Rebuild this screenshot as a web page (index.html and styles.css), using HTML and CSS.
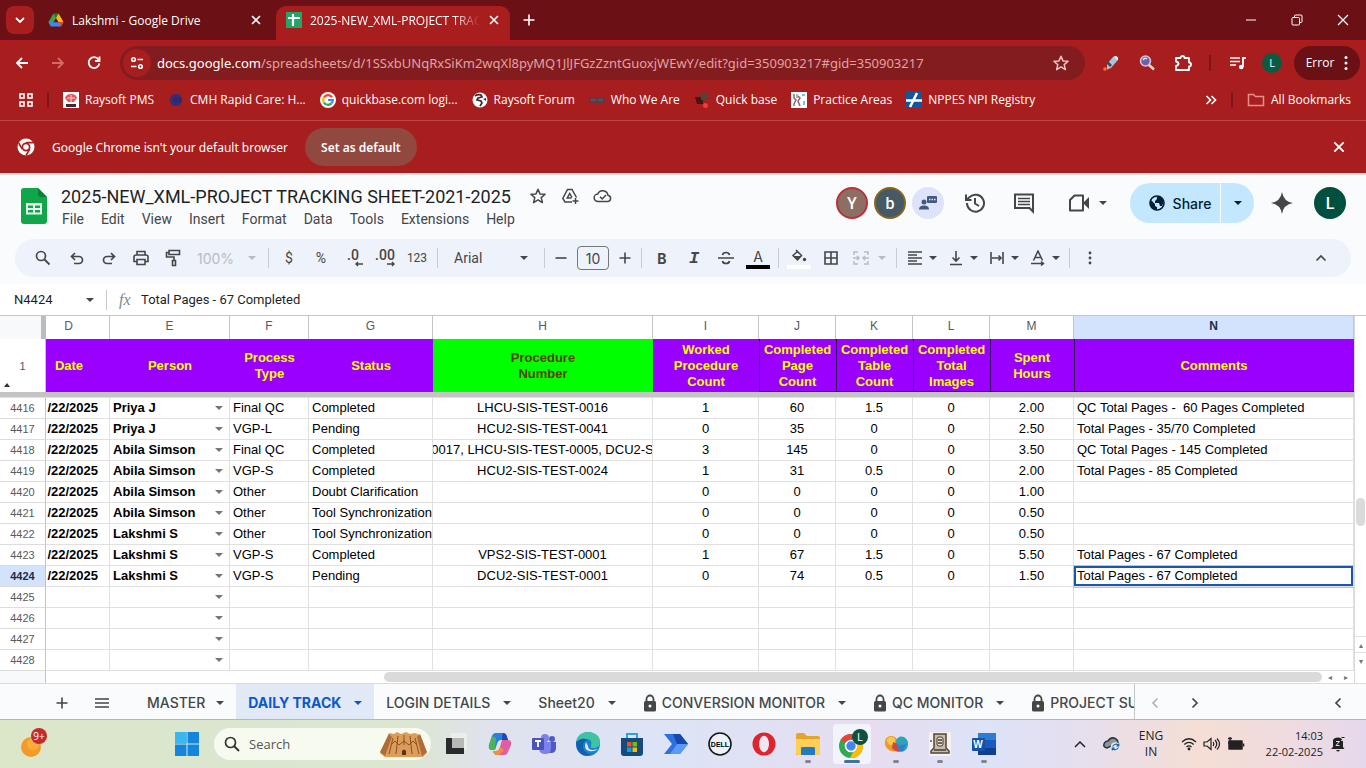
FILE: index.html
```html
<!DOCTYPE html>
<html lang="en">
<head>
  <meta charset="UTF-8">
  <meta name="viewport" content="width=device-width, initial-scale=1">
  <title>2025-NEW_XML-PROJECT TRACKING SHEET-2021-2025</title>
  <link rel="stylesheet" href="styles.css">
</head>
<body>

  <!-- shared icons -->
  <svg class="defs" width="0" height="0">
    <symbol id="x" viewBox="0 0 12 12"><path d="M2 2l8 8M10 2l-8 8" fill="none" stroke="currentColor" stroke-width="1.6"/></symbol>
    <symbol id="plus" viewBox="0 0 12 12"><path d="M6 .5v11M.5 6h11" fill="none" stroke="currentColor" stroke-width="1.6"/></symbol>
    <symbol id="lock" viewBox="0 0 14 18"><path d="M3.500 8V5a3.500 3.500 0 0 1 7 0v3" fill="none" stroke="currentColor" stroke-width="1.800"/><rect x="1" y="7" width="12" height="10.500" rx="1.500" fill="currentColor"/><circle cx="7" cy="12" r="1.500" fill="#f9fbfd"/></symbol>
    <symbol id="star" viewBox="0 0 18 18"><path d="M9 2.200l2 4.700 5.100.4-3.900 3.300 1.200 5L9 12.900l-4.400 2.700 1.200-5L1.900 7.300l5.100-.4z" fill="none" stroke="currentColor" stroke-width="1.500" stroke-linejoin="round"/></symbol>
    <symbol id="chrome-mono" viewBox="0 0 18 18"><circle cx="9" cy="9" r="8.500" fill="currentColor"/><circle cx="9" cy="9" r="3.600" fill="currentColor" stroke="#a81d1d" stroke-width="1.700"/><path d="M9 4.600h7.500M5.200 11.200L1.700 5M12.800 11.200L9 17.500" stroke="#a81d1d" stroke-width="1.600"/></symbol>
  </svg>

  <!-- browser tabs -->
  <header class="tabstrip">
    <button class="tab-search" aria-label="Search tabs"><svg width="10" height="7" viewBox="0 0 10 7"><path d="M1 1l4 4 4-4" fill="none" stroke="currentColor" stroke-width="1.800"/></svg></button>
    <div class="tab">
      <svg width="16" height="16" viewBox="0 0 16 16"><path d="M5.500 1.500h5L8 6z" fill="#188038"/><path d="M5.500 1.500L8 6l-5 8.500L.5 10z" fill="#34a853"/><path d="M10.500 1.500L15.500 10h-5L8 6z" fill="#fbbc04"/><path d="M.5 10.200h15L13 14.500H3z" fill="#4285f4"/><path d="M10.500 10h5L13 14.500z" fill="#ea4335"/></svg>
      <span class="tab-name">Lakshmi - Google Drive</span>
      <button class="close" aria-label="Close tab"><svg width="12" height="12"><use href="#x"/></svg></button>
    </div>
    <div class="tab current">
      <svg width="16" height="16" viewBox="0 0 16 16"><rect width="16" height="16" fill="#23a566"/><path d="M2 6h12M7 2v12" stroke="#fff" stroke-width="2.200"/></svg>
      <span class="tab-name">2025-NEW_XML-PROJECT TRAC</span>
      <button class="close" aria-label="Close tab"><svg width="12" height="12"><use href="#x"/></svg></button>
    </div>
    <button class="new-tab" aria-label="New tab"><svg width="12" height="12"><use href="#plus"/></svg></button>
    <div class="window-buttons">
      <button aria-label="Minimize"><svg width="12" height="12" viewBox="0 0 12 12"><path d="M1 6h10" stroke="currentColor"/></svg></button>
      <button aria-label="Restore"><svg width="12" height="12" viewBox="0 0 12 12"><g fill="none" stroke="currentColor"><rect x="1" y="3.500" width="7.500" height="7.500" rx="1"/><path d="M3.500 3.500V2q0-1 1-1H10q1 0 1 1v5.500q0 1-1 1H8.500"/></g></svg></button>
      <button aria-label="Close"><svg width="12" height="12" viewBox="0 0 12 12"><path d="M1 1l10 10M11 1L1 11" stroke="currentColor" stroke-width="1.200"/></svg></button>
    </div>
  </header>

  <!-- address bar -->
  <div class="navbar">
    <button class="nav" aria-label="Back"><svg width="16" height="16" viewBox="0 0 16 16"><path d="M14 8H3M8 3L3 8l5 5" fill="none" stroke="currentColor" stroke-width="1.800"/></svg></button>
    <button class="nav dim" aria-label="Forward"><svg width="16" height="16" viewBox="0 0 16 16"><path d="M2 8h11M8 3l5 5-5 5" fill="none" stroke="currentColor" stroke-width="1.800"/></svg></button>
    <button class="nav" aria-label="Reload"><svg width="16" height="16" viewBox="0 0 16 16"><path d="M12.500 4.500A5.400 5.400 0 1 0 13.400 8.500M13.500 1.500V6H9" fill="none" stroke="currentColor" stroke-width="1.800"/></svg></button>
    <div class="omnibox">
      <button class="site-info" aria-label="Site information"><svg width="14" height="14" viewBox="0 0 14 14"><g fill="none" stroke="currentColor" stroke-width="1.600"><circle cx="3.500" cy="3.500" r="1.800"/><path d="M7.500 3.500H13M1 10.500h5.500"/><circle cx="10.500" cy="10.500" r="1.800"/></g></svg></button>
      <div class="url"><b>docs.google.com</b>/spreadsheets/d/1SSxbUNqRxSiKm2wqXl8pyMQ1JlJFGzZzntGuoxjWEwY/edit?gid=350903217#gid=350903217</div>
      <button class="fav" aria-label="Bookmark this tab"><svg width="18" height="18"><use href="#star"/></svg></button>
    </div>
    <div class="extensions">
      <button aria-label="Color picker"><svg width="18" height="18" viewBox="0 0 18 18"><path d="M5 10l6-7q2-1.500 4 0t0 4l-6 7-4 1.500z" fill="#a9c6d6"/><path d="M4 9l4 4 2-2-4-4z" fill="#3b4a55"/><path d="M12 2.500q2-1 3.500.5t0 3.500z" fill="#e9f3f8"/><circle cx="3" cy="15" r="1.800" fill="#ff6b3d"/></svg></button>
      <button aria-label="Zoom"><svg width="18" height="18" viewBox="0 0 18 18"><path d="M10.500 10.500l5.500 5" stroke="#e8d5cf" stroke-width="2.600"/><circle cx="7.500" cy="7" r="5" fill="#6d5fa8" stroke="#d8c4d2" stroke-width="1.600"/><path d="M5 6q2-3 4-1" stroke="#cfe2ff" stroke-width="1.500" fill="none"/></svg></button>
      <button aria-label="Extensions"><svg width="18" height="18" viewBox="0 0 18 18"><path d="M2 4h4.500a2 2 0 1 1 4 0H15v4.500a2 2 0 1 1 0 4V16H2v-4q2.500-.5 2.500-2.200T2 7.500z" fill="none" stroke="currentColor" stroke-width="1.800" stroke-linejoin="round"/></svg></button>
    </div>
    <span class="bar"></span>
    <button class="media" aria-label="Media controls"><svg width="18" height="16" viewBox="0 0 18 16"><path d="M1 3h10M1 6.500h10M1 10h6" stroke="currentColor" stroke-width="1.600"/><path d="M14 12V3h3" fill="none" stroke="currentColor" stroke-width="1.800"/><circle cx="12.200" cy="12" r="2.300" fill="currentColor"/></svg></button>
    <button class="profile" aria-label="Profile">L</button>
    <button class="error">Error <svg width="4" height="16" viewBox="0 0 4 16"><g fill="currentColor"><circle cx="2" cy="2.500" r="1.500"/><circle cx="2" cy="8" r="1.500"/><circle cx="2" cy="13.500" r="1.500"/></g></svg></button>
  </div>

  <!-- bookmarks -->
  <nav class="bookmarks">
    <button aria-label="Apps"><svg width="14" height="14" viewBox="0 0 14 14"><g fill="none" stroke="currentColor" stroke-width="1.600"><rect x="1" y="1" width="4" height="4"/><rect x="9" y="1" width="4" height="4"/><rect x="1" y="9" width="4" height="4"/><rect x="9" y="9" width="4" height="4"/></g></svg></button>
    <span class="bar"></span>
    <a href="#"><svg width="16" height="16" viewBox="0 0 16 16"><rect width="16" height="16" fill="#fff"/><path d="M2 6q1-4 6-4t6 4l-3 4H5z" fill="#e2585f"/><path d="M4 6h8M8 3v8" stroke="#fbd0d0"/><path d="M3 12h10v3H3z" fill="#3a2b35"/></svg>Raysoft PMS</a>
    <a href="#"><svg width="16" height="16" viewBox="0 0 16 16"><circle cx="8" cy="8" r="6" fill="#3a2560"/><path d="M13 4a6 6 0 1 0 0 8l-3-2a3 3 0 1 1 0-4z" fill="#283488"/></svg>CMH Rapid Care: H...</a>
    <a href="#"><svg width="16" height="16" viewBox="0 0 16 16"><circle cx="8" cy="8" r="8" fill="#fff"/><g fill="none" stroke-width="2.200"><path d="M12 5.200A4.800 4.800 0 0 0 4 5.400" stroke="#ea4335"/><path d="M4 5.400a4.800 4.800 0 0 0 0 5.200" stroke="#fbbc05"/><path d="M4 10.600a4.800 4.800 0 0 0 7.400.8" stroke="#34a853"/><path d="M11.400 11.400A4.800 4.800 0 0 0 12.800 8H8" stroke="#4285f4"/></g></svg>quickbase.com logi...</a>
    <a href="#"><svg width="16" height="16" viewBox="0 0 16 16"><circle cx="8" cy="8" r="7.500" fill="#fff"/><path d="M3 4q3-2 6-1l1 2-4 1-1 2 4 1 1 2-2 3" fill="none" stroke="#3a2a2c" stroke-width="1.700"/><path d="M11 7l3-1v3z" fill="#3a2a2c"/></svg>Raysoft Forum</a>
    <a href="#"><svg width="16" height="16" viewBox="0 0 16 16"><rect y="5" width="16" height="6" rx="2" fill="#66363a"/><path d="M2 8h5M9 8h5" fill="none" stroke="#4d5663" stroke-width="2.500"/></svg>Who We Are</a>
    <a href="#"><svg width="16" height="16" viewBox="0 0 16 16"><path d="M1 5h8v7H3z" fill="#441512"/><path d="M6 1l8 1-1 6H7z" fill="#4c4839"/><circle cx="11.500" cy="13.500" r="2.500" fill="#f23d3d"/></svg>Quick base</a>
    <a href="#"><svg width="16" height="16" viewBox="0 0 16 16"><rect width="16" height="16" fill="#fff"/><path d="M3 2v4l2 2-2 4v2M7 4l2 2-2 3 2 5" fill="none" stroke="#8d6470" stroke-width="1.500"/><path d="M6 2v4M13 9v4M11 3h3" stroke="#64a9a4" stroke-width="1.500"/></svg>Practice Areas</a>
    <a href="#"><svg width="16" height="16" viewBox="0 0 16 16"><rect width="16" height="16" fill="#14569e"/><path d="M0 8.500h16M11 1L4 15" stroke="#fff" stroke-width="2.600"/></svg>NPPES NPI Registry</a>
    <button class="more-marks" aria-label="More bookmarks"><svg width="12" height="10" viewBox="0 0 12 10"><path d="M1.500 1l4 4-4 4M6.500 1l4 4-4 4" fill="none" stroke="currentColor" stroke-width="1.700"/></svg></button>
    <span class="bar"></span>
    <a href="#"><svg width="18" height="14" viewBox="0 0 18 14"><path d="M1.500 1.500h5l2 2h8v9h-15z" fill="none" stroke="#e88e8a" stroke-width="1.500"/></svg>All Bookmarks</a>
  </nav>

  <div class="infobar">
    <svg width="18" height="18"><use href="#chrome-mono"/></svg>
    <span>Google Chrome isn't your default browser</span>
    <button class="set-default">Set as default</button>
    <button class="close" aria-label="Dismiss"><svg width="14" height="14"><use href="#x"/></svg></button>
  </div>

  <!-- sheets header -->
  <main class="app">
    <div class="doc-head">
      <svg class="logo" width="28" height="36" viewBox="0 0 28 36"><path d="M4 0h14l9 9v24q0 3-3 3H4q-3 0-3-3V3q0-3 3-3z" fill="#10a64a"/><path d="M18 0l9 9h-6q-3 0-3-3z" fill="#087f3a"/><path d="M6 15h16v11.500H6z" fill="#e9f7ee"/><path d="M8 17.500h5v2.500H8zM15 17.500h5v2.500h-5zM8 22h5v2.500H8zM15 22h5v2.500h-5z" fill="#10a64a"/></svg>
      <div class="doc-info">
        <div class="title-row">
          <h1>2025-NEW_XML-PROJECT TRACKING SHEET-2021-2025</h1>
          <button aria-label="Star"><svg width="18" height="18"><use href="#star"/></svg></button>
          <button aria-label="Move"><svg width="18" height="18" viewBox="0 0 18 18"><g fill="none" stroke="currentColor" stroke-width="1.500"><path d="M11 15H4L1.800 11.500 6.500 2.500h4.500l4.500 8"/><path d="M10.500 11H6.200L8.700 6.500l2.300 4"/><path d="M14.500 11v6M11.500 14h6"/></g></svg></button>
          <button aria-label="Document status"><svg width="20" height="16" viewBox="0 0 20 16"><g fill="none" stroke="currentColor" stroke-width="1.500"><path d="M5 13.500a3.700 3.700 0 0 1-.3-7.400 5.300 5.300 0 0 1 10.200 1.100A3.200 3.200 0 0 1 15 13.500z"/><path d="M7 8.700l2.200 2.200 3.800-3.900"/></g></svg></button>
        </div>
        <div class="menus">
          <button>File</button><button>Edit</button><button>View</button><button>Insert</button><button>Format</button><button>Data</button><button>Tools</button><button>Extensions</button><button>Help</button>
        </div>
      </div>
      <div class="doc-actions">
        <span class="avatar y">Y</span>
        <span class="avatar b">b</span>
        <span class="avatar chat"><svg width="20" height="18" viewBox="0 0 20 18"><g fill="#44597e"><circle cx="6" cy="8" r="2.500"/><path d="M1 15.500q0-4 5-4t5 4z"/><rect x="9" y="2" width="10" height="7" rx="1"/></g><path d="M11 5.500h1.500M13.500 5.500H15M16 5.500h1.500" stroke="#dfe6fb" stroke-width="1.500"/></svg></span>
        <button class="act history" aria-label="Version history"><svg width="22" height="22" viewBox="0 0 22 22"><path d="M3 11a8.500 8.500 0 1 0 2.700-6L2 8M2 2.500V8h5.500M11 6v5.500l4 2.500" fill="none" stroke="currentColor" stroke-width="2"/></svg></button>
        <button class="act" aria-label="Comments"><svg width="22" height="22" viewBox="0 0 22 22"><path d="M2 2.500h18v17l-3.500-3.500H2z" fill="none" stroke="currentColor" stroke-width="2"/><path d="M5 6.500h12M5 9.500h12M5 12.500h12" stroke="currentColor" stroke-width="1.700"/></svg></button>
        <button class="meet" aria-label="Join a call"><svg width="22" height="20" viewBox="0 0 22 20"><path d="M6.500 2.500H15v15H2V7z" fill="none" stroke="currentColor" stroke-width="2" stroke-linejoin="round"/><path d="M16 9l5-5v12l-5-5z" fill="currentColor"/></svg><i class="caret"></i></button>
        <div class="share">
          <button class="share-main"><svg width="16" height="16" viewBox="0 0 16 16"><circle cx="8" cy="8" r="7" fill="#c2e7ff" stroke="#001d35" stroke-width="1.600"/><path d="M2 5l4 4v2l2 1v3Q2 14 1 8zM9 1q-2 1-1 3L6 6v2h4l1 3h2q2-3 1-6l-2-3z" fill="#001d35"/></svg>Share</button>
          <button class="share-more" aria-label="Share options"><i class="caret"></i></button>
        </div>
        <button class="gemini" aria-label="Gemini"><svg width="22" height="22" viewBox="0 0 22 22"><path d="M11 0q1.500 9.500 11 11-9.500 1.500-11 11Q9.500 12.500 0 11 9.500 9.500 11 0z" fill="currentColor"/></svg></button>
        <span class="avatar me">L</span>
      </div>
    </div>

    <!-- formatting toolbar -->
    <div class="toolbar">
      <button class="tb first" aria-label="Search the menus"><svg width="16" height="16" viewBox="0 0 16 16"><circle cx="6" cy="6" r="4.500" fill="none" stroke="currentColor" stroke-width="1.700"/><path d="M9.500 9.500l5 5" stroke="currentColor" stroke-width="1.800"/></svg></button>
      <button class="tb" aria-label="Undo"><svg width="16" height="16" viewBox="0 0 16 16"><path d="M6 3L2.500 6.500 6 10M3 6.500h7a3.500 3.500 0 0 1 0 7H5" fill="none" stroke="currentColor" stroke-width="1.700"/></svg></button>
      <button class="tb" aria-label="Redo"><svg width="16" height="16" viewBox="0 0 16 16"><path d="M10 3l3.500 3.500L10 10M13 6.500H6a3.500 3.500 0 0 0 0 7h5" fill="none" stroke="currentColor" stroke-width="1.700"/></svg></button>
      <button class="tb" aria-label="Print"><svg width="16" height="16" viewBox="0 0 16 16"><g fill="none" stroke="currentColor" stroke-width="1.600"><path d="M4 5V1.500h8V5M4 11.500H1V7q0-2 2-2h10q2 0 2 2v4.500h-3"/><path d="M4 9.500h8v5H4z"/></g></svg></button>
      <button class="tb" aria-label="Paint format"><svg width="16" height="18" viewBox="0 0 16 18"><g fill="none" stroke="currentColor" stroke-width="1.600"><path d="M4 1.500h10.500v4H4zM4 3.500H1.500V8H9v4"/><path d="M7.500 11.500h3v5h-3z"/></g></svg></button>
      <button class="zoom">100%<i class="caret"></i></button>
      <span class="sep"></span>
      <button class="tb txt">$</button>
      <button class="tb txt">%</button>
      <button class="tb dec"><span>.0</span><svg width="10" height="6" viewBox="0 0 10 6"><path d="M9 3H2M4 1L2 3l2 2" fill="none" stroke="currentColor" stroke-width="1.400"/></svg></button>
      <button class="tb dec"><span>.00</span><svg width="10" height="6" viewBox="0 0 10 6"><path d="M1 3h7M6 1l2 2-2 2" fill="none" stroke="currentColor" stroke-width="1.400"/></svg></button>
      <button class="tb num">123</button>
      <span class="sep"></span>
      <button class="font">Arial<i class="caret"></i></button>
      <span class="sep"></span>
      <button class="step" aria-label="Decrease font size"><svg width="12" height="12" viewBox="0 0 12 12"><path d="M.5 6h11" stroke="currentColor" stroke-width="1.600"/></svg></button>
      <input class="size" type="text" value="10" aria-label="Font size">
      <button class="step" aria-label="Increase font size"><svg width="12" height="12"><use href="#plus"/></svg></button>
      <span class="sep"></span>
      <button class="tb bold">B</button>
      <button class="tb ital">I</button>
      <button class="tb" aria-label="Strikethrough"><svg width="16" height="16" viewBox="0 0 16 16"><path d="M0 8h16M11.500 5Q11 2.500 8 2.500T4.500 5M4.500 11Q5 13.500 8 13.500t3.500-2.500" fill="none" stroke="currentColor" stroke-width="1.700"/></svg></button>
      <button class="tb color">A</button>
      <span class="sep"></span>
      <button class="tb fill" aria-label="Fill color"><svg width="16" height="14" viewBox="0 0 16 14"><path d="M5 1l5.500 5.500L6.500 11 2 6.500 7 2" fill="none" stroke="currentColor" stroke-width="1.500"/><path d="M2 7h8.500l-4 4z" fill="currentColor"/><circle cx="13.500" cy="10.500" r="1.700" fill="currentColor"/></svg></button>
      <button class="tb" aria-label="Borders"><svg width="14" height="14" viewBox="0 0 14 14"><path d="M1 1h12v12H1zM7 1v12M1 7h12" fill="none" stroke="currentColor" stroke-width="1.600"/></svg></button>
      <button class="drop off" aria-label="Merge cells"><svg width="16" height="14" viewBox="0 0 16 14"><path d="M5 1H1v3M11 1h4v3M5 13H1v-3M11 13h4v-3M0 7h6M4 5l2 2-2 2M16 7h-6M12 5l-2 2 2 2" fill="none" stroke="currentColor" stroke-width="1.500"/></svg><i class="caret"></i></button>
      <span class="sep"></span>
      <button class="drop" aria-label="Horizontal align"><svg width="16" height="14" viewBox="0 0 16 14"><path d="M1 1h14M1 4h9M1 7h14M1 10h9M1 13h14" stroke="currentColor" stroke-width="1.500"/></svg><i class="caret"></i></button>
      <button class="drop" aria-label="Vertical align"><svg width="16" height="16" viewBox="0 0 16 16"><path d="M8 1v10M4.500 7.500L8 11l3.500-3.500M2 14.500h12" fill="none" stroke="currentColor" stroke-width="1.600"/></svg><i class="caret"></i></button>
      <button class="drop" aria-label="Text wrapping"><svg width="16" height="14" viewBox="0 0 16 14"><path d="M2 1v12M14 1v12M3 7h9M9.500 4.500L12 7 9.500 9.500" fill="none" stroke="currentColor" stroke-width="1.600"/></svg><i class="caret"></i></button>
      <button class="drop" aria-label="Text rotation"><svg width="16" height="16" viewBox="0 0 16 16"><path d="M3.500 10.500L8 1l4.500 9.500M5 7.500h6M1 13.500h12M11 11.500l2.500 2-2.500 2" fill="none" stroke="currentColor" stroke-width="1.500"/></svg><i class="caret"></i></button>
      <span class="sep"></span>
      <button class="tb" aria-label="More"><svg width="4" height="14" viewBox="0 0 4 14"><g fill="currentColor"><circle cx="2" cy="2" r="1.400"/><circle cx="2" cy="7" r="1.400"/><circle cx="2" cy="12" r="1.400"/></g></svg></button>
      <button class="tb collapse" aria-label="Hide the menus"><svg width="12" height="8" viewBox="0 0 12 8"><path d="M1.500 6.500L6 2l4.500 4.500" fill="none" stroke="currentColor" stroke-width="1.700"/></svg></button>
    </div>

    <div class="formula-bar">
      <input class="name-box" type="text" value="N4424" aria-label="Name box">
      <i class="caret"></i>
      <span class="sep"></span>
      <span class="fx">fx</span>
      <input class="formula" type="text" value="Total Pages - 67 Completed" aria-label="Formula bar">
    </div>

    <!-- grid -->
    <div class="sheet">
      <div class="grid">
        <table>
          <colgroup>
            <col class="c-row"><col class="c-d"><col class="c-e"><col class="c-f"><col class="c-g"><col class="c-h"><col class="c-i"><col class="c-s"><col class="c-s"><col class="c-s"><col class="c-m"><col>
          </colgroup>
          <thead>
            <tr class="letters"><th class="corner"></th><th class="date">D</th><th>E</th><th>F</th><th>G</th><th>H</th><th>I</th><th>J</th><th>K</th><th>L</th><th>M</th><th class="on">N</th></tr>
            <tr class="titles"><th class="rownum">1<i class="up"></i></th><th class="date">Date</th><th>Person</th><th>Process<br>Type</th><th>Status</th><th class="green">Procedure<br>Number</th><th>Worked<br>Procedure<br>Count</th><th class="line">Completed<br>Page<br>Count</th><th class="line">Completed<br>Table<br>Count</th><th class="line">Completed<br>Total<br>Images</th><th class="line">Spent<br>Hours</th><th class="line">Comments</th></tr>
            <tr class="freeze"><td colspan="12"></td></tr>
          </thead>
          <tbody>
            <tr><th>4416</th><td class="dt">/22/2025</td><td class="who">Priya J</td><td>Final QC</td><td>Completed</td><td class="n">LHCU-SIS-TEST-0016</td><td class="n">1</td><td class="n">60</td><td class="n">1.5</td><td class="n">0</td><td class="n">2.00</td><td>QC Total Pages -&nbsp; 60 Pages Completed</td></tr>
            <tr><th>4417</th><td class="dt">/22/2025</td><td class="who">Priya J</td><td>VGP-L</td><td>Pending</td><td class="n">HCU2-SIS-TEST-0041</td><td class="n">0</td><td class="n">35</td><td class="n">0</td><td class="n">0</td><td class="n">2.50</td><td>Total Pages - 35/70 Completed</td></tr>
            <tr><th>4418</th><td class="dt">/22/2025</td><td class="who">Abila Simson</td><td>Final QC</td><td>Completed</td><td class="clip"><div>0017, LHCU-SIS-TEST-0005, DCU2-S</div></td><td class="n">3</td><td class="n">145</td><td class="n">0</td><td class="n">0</td><td class="n">3.50</td><td>QC Total Pages - 145 Completed</td></tr>
            <tr><th>4419</th><td class="dt">/22/2025</td><td class="who">Abila Simson</td><td>VGP-S</td><td>Completed</td><td class="n">HCU2-SIS-TEST-0024</td><td class="n">1</td><td class="n">31</td><td class="n">0.5</td><td class="n">0</td><td class="n">2.00</td><td>Total Pages - 85 Completed</td></tr>
            <tr><th>4420</th><td class="dt">/22/2025</td><td class="who">Abila Simson</td><td>Other</td><td>Doubt Clarification</td><td></td><td class="n">0</td><td class="n">0</td><td class="n">0</td><td class="n">0</td><td class="n">1.00</td><td></td></tr>
            <tr><th>4421</th><td class="dt">/22/2025</td><td class="who">Abila Simson</td><td>Other</td><td>Tool Synchronization</td><td></td><td class="n">0</td><td class="n">0</td><td class="n">0</td><td class="n">0</td><td class="n">0.50</td><td></td></tr>
            <tr><th>4422</th><td class="dt">/22/2025</td><td class="who">Lakshmi S</td><td>Other</td><td>Tool Synchronization</td><td></td><td class="n">0</td><td class="n">0</td><td class="n">0</td><td class="n">0</td><td class="n">0.50</td><td></td></tr>
            <tr><th>4423</th><td class="dt">/22/2025</td><td class="who">Lakshmi S</td><td>VGP-S</td><td>Completed</td><td class="n">VPS2-SIS-TEST-0001</td><td class="n">1</td><td class="n">67</td><td class="n">1.5</td><td class="n">0</td><td class="n">5.50</td><td>Total Pages - 67 Completed</td></tr>
            <tr><th class="on">4424</th><td class="dt">/22/2025</td><td class="who">Lakshmi S</td><td>VGP-S</td><td>Pending</td><td class="n">DCU2-SIS-TEST-0001</td><td class="n">0</td><td class="n">74</td><td class="n">0.5</td><td class="n">0</td><td class="n">1.50</td><td class="active">Total Pages - 67 Completed</td></tr>
            <tr><th>4425</th><td></td><td class="who"></td><td></td><td></td><td></td><td></td><td></td><td></td><td></td><td></td><td></td></tr>
            <tr><th>4426</th><td></td><td class="who"></td><td></td><td></td><td></td><td></td><td></td><td></td><td></td><td></td><td></td></tr>
            <tr><th>4427</th><td></td><td class="who"></td><td></td><td></td><td></td><td></td><td></td><td></td><td></td><td></td><td></td></tr>
            <tr><th>4428</th><td></td><td class="who"></td><td></td><td></td><td></td><td></td><td></td><td></td><td></td><td></td><td></td></tr>
          </tbody>
        </table>
        <div class="hscroll">
          <span class="hcorner"></span>
          <span class="htrack"><i></i></span>
          <button aria-label="Scroll left">◂</button>
          <button aria-label="Scroll right">▸</button>
        </div>
      </div>
      <div class="vscroll">
        <i class="thumb"></i>
        <button aria-label="Scroll up">▴</button>
        <button aria-label="Scroll down">▾</button>
      </div>
    </div>

    <!-- sheet tabs -->
    <div class="sheet-tabs">
      <button class="st-icon" aria-label="Add sheet"><svg width="12" height="12"><use href="#plus"/></svg></button>
      <button class="st-icon" aria-label="All sheets"><svg width="16" height="12" viewBox="0 0 16 12"><path d="M1 2h14M1 6h14M1 10h14" stroke="currentColor" stroke-width="1.600"/></svg></button>
      <div class="st-list">
        <button class="st master">MASTER<i class="caret"></i></button>
        <button class="st current">DAILY TRACK<i class="caret"></i></button>
        <button class="st">LOGIN DETAILS<i class="caret"></i></button>
        <button class="st">Sheet20<i class="caret"></i></button>
        <button class="st locked"><svg width="14" height="18"><use href="#lock"/></svg>CONVERSION MONITOR<i class="caret"></i></button>
        <button class="st locked"><svg width="14" height="18"><use href="#lock"/></svg>QC MONITOR<i class="caret"></i></button>
        <button class="st locked"><svg width="14" height="18"><use href="#lock"/></svg>PROJECT SU</button>
      </div>
      <button class="st-icon faint" aria-label="Scroll tabs left"><svg width="8" height="12" viewBox="0 0 8 12"><path d="M6.500 1.500L2 6l4.500 4.500" fill="none" stroke="currentColor" stroke-width="1.700"/></svg></button>
      <button class="st-icon" aria-label="Scroll tabs right"><svg width="8" height="12" viewBox="0 0 8 12"><path d="M1.500 1.500L6 6l-4.500 4.500" fill="none" stroke="currentColor" stroke-width="1.700"/></svg></button>
      <button class="st-icon side" aria-label="Show side panel"><svg width="8" height="12" viewBox="0 0 8 12"><path d="M6.500 1.500L2 6l4.500 4.500" fill="none" stroke="currentColor" stroke-width="1.700"/></svg></button>
    </div>
  </main>

  <!-- windows taskbar -->
  <footer class="taskbar">
    <button class="weather" aria-label="Weather"><svg width="26" height="28" viewBox="0 0 26 28"><circle cx="11" cy="17" r="10" fill="#f39a2b"/><circle cx="13" cy="14" r="6" fill="#f8ad3c"/></svg><span class="badge">9+</span></button>
    <div class="apps">
      <button aria-label="Start"><svg width="24" height="24" viewBox="0 0 24 24"><path d="M0 0h11.500v11.500H0zM12.500 0H24v11.500H12.500zM0 12.500h11.500V24H0zM12.500 12.500H24V24H12.500z" fill="#1485dc"/><path d="M0 0h11.500v11.500H0z" fill="#39b7ef"/></svg></button>
      <div class="search">
        <svg width="16" height="16" viewBox="0 0 16 16"><circle cx="6.500" cy="6.500" r="5" fill="none" stroke="#333" stroke-width="1.700"/><path d="M10 10l5 5" stroke="#333" stroke-width="1.900"/></svg>
        <input type="text" placeholder="Search" aria-label="Search">
        <svg width="48" height="26" viewBox="0 0 48 26"><path d="M9 2l5 1 3-2 4 2 5-2 4 2 5-1 5 2 7 18-4 4H5l-5-4z" fill="#dd9d59"/><path d="M0 21l9-18 3 3-7 19zM47 21l-7-18-3 3 5 19z" fill="#ad6d38"/><g stroke="#875025" stroke-width="1" fill="none"><path d="M13 7l-4 16M18 5l-2 18M24 4v10M30 5l2 18M35 7l4 16M11 14l4-4 4 4 5-4 5 4 4-4 4 4"/></g><path d="M22 24v-4q2-3 4 0v4z" fill="#5b3318"/></svg>
      </div>
      <button aria-label="Task view"><svg width="22" height="22" viewBox="0 0 22 22"><path d="M6 0h16v16H6z" fill="#eceee9"/><path d="M1 5h18v16H1z" fill="#292c2e"/><path d="M7 5h12v10H7z" fill="#b7b9b7"/></svg></button>
      <button aria-label="Copilot"><svg width="24" height="24" viewBox="0 0 24 24"><path d="M8 1h7q3 0 4 4l1 3h-7q-3 0-4 4l-2 6H4q-4 0-3-5l3-9q1-3 4-3z" fill="#2a7fe0"/><path d="M1 13l3-9 4 2-1 12H4q-4 0-3-5z" fill="#49b45c"/><path d="M16 23H9q-3 0-4-4h3q3 0 4-4l2-7h6q4 0 3 5l-3 7q-1 3-4 3z" fill="#e05da0"/><path d="M5 19h3q3 0 4-4l4 3-5 5H9q-3 0-4-4z" fill="#f29036"/><path d="M15 1q3 0 4 4l1 3h-6q0-5 1-7z" fill="#1b49b5"/></svg></button>
      <button aria-label="Teams"><svg width="24" height="22" viewBox="0 0 24 22"><circle cx="20" cy="6" r="3" fill="#5059c9"/><circle cx="13" cy="5" r="4" fill="#7b83eb"/><path d="M16 9h8v6q0 5-5 5h-3z" fill="#5059c9"/><path d="M7 9h12v6q0 6-6 6t-6-6z" fill="#7b83eb"/><rect y="5" width="12" height="12" rx="1" fill="#4b53bc"/><path d="M3 8h6M6 8v6" stroke="#fff" stroke-width="1.800"/></svg></button>
      <button aria-label="Edge"><svg width="24" height="24" viewBox="0 0 24 24"><circle cx="12" cy="12" r="12" fill="#1682d0"/><path d="M0 10Q2 0 12 0q12 1 12 10 0 6-7 6-3 0-2-2 2-7-5-7-6 0-10 3z" fill="#41c3a3"/><path d="M0 10q6-6 12-2-6 1-5 8 2 6 9 6Q6 27 1 17q-1-4-1-7z" fill="#1261af"/><path d="M10 10q-3 7 3 9 5 1 9-2l-5 1q-5 0-5-4z" fill="#dfe9f8"/></svg></button>
      <button aria-label="Store"><svg width="24" height="24" viewBox="0 0 24 24"><path d="M7 6V2h10v4" fill="none" stroke="#2ea3de" stroke-width="2"/><path d="M1 6h22v15q0 3-3 3H4q-3 0-3-3z" fill="#164b80"/><path d="M7 10h4.500v4.500H7z" fill="#f25022"/><path d="M12.500 10H17v4.500h-4.500z" fill="#7fba00"/><path d="M7 15.500h4.500V20H7z" fill="#00a4ef"/><path d="M12.500 15.500H17V20h-4.500z" fill="#ffb900"/></svg></button>
      <button aria-label="Power Automate"><svg width="24" height="20" viewBox="0 0 24 20"><path d="M0 0h16l8 10-8 10H0l8-10z" fill="#2f6fe0"/><path d="M9 0h7l8 10H13z" fill="#1747b0"/><path d="M13 10h11l-8 10H6z" fill="#5b9bf5"/></svg></button>
      <button aria-label="Dell"><svg width="24" height="24" viewBox="0 0 24 24"><circle cx="12" cy="12" r="11" fill="#eef2f8" stroke="#15191d" stroke-width="1.600"/><text x="12" y="15" text-anchor="middle" class="dell">DELL</text></svg></button>
      <button aria-label="Opera"><svg width="24" height="24" viewBox="0 0 24 24"><circle cx="12" cy="12" r="11.500" fill="#e0242f"/><ellipse cx="12" cy="12" rx="5" ry="8.300" fill="#ece9f4"/></svg></button>
      <button class="run" aria-label="File Explorer"><svg width="24" height="22" viewBox="0 0 24 22"><path d="M0 2q0-2 2-2h6l3 3h11q2 0 2 2v15q0 2-2 2H0z" fill="#e5a52a"/><path d="M0 6h24v14q0 2-2 2H2q-2 0-2-2z" fill="#fdcf57"/><path d="M5 15q0-1 2-1h10q2 0 2 1v7H5z" fill="#2479c3"/></svg></button>
      <button class="run front" aria-label="Chrome"><svg width="34" height="30" viewBox="0 0 34 30"><circle cx="16" cy="17" r="12" fill="#34a853"/><path d="M16 17L5.600 11A12 12 0 0 1 26.400 11z" fill="#ea4335"/><path d="M16 17h5l-6 12A12 12 0 0 0 26.400 11H16z" fill="#fbbc04"/><circle cx="16" cy="17" r="5.500" fill="#4285f4" stroke="#fff" stroke-width="1.600"/><circle cx="25" cy="8" r="8" fill="#0e5141"/><text x="25" y="12" text-anchor="middle" class="mini">L</text></svg></button>
      <button class="run" aria-label="Copilot 365"><svg width="24" height="20" viewBox="0 0 24 20"><path d="M1 7q1-5 7-5 5 1 6 6v8q-4 3-9 0Q0 13 1 7z" fill="#f09a2b"/><path d="M3 5q4-4 8 0v5l-4 1q-4 0-4-6z" fill="#fbc84b"/><path d="M12 7q2-6 8-4 5 3 4 8-1 7-8 7l-5-3z" fill="#28a5b8"/><path d="M9 8l5 2 1 8q-5-1-7-4z" fill="#d3483e"/><path d="M14 12l8-2-3 7h-4z" fill="#347bd2"/></svg></button>
      <button class="run" aria-label="Grid tool"><svg width="22" height="24" viewBox="0 0 22 24"><path d="M0 0h22v24H0z" fill="#f3f2ef"/><path d="M5 2h12v14l3 3v2H2v-2l3-3z" fill="#c7bcae" stroke="#50463e" stroke-width="1.500"/><rect x="8" y="5" width="6" height="9" rx="2" fill="#eee2cf" stroke="#463b33"/><path d="M9 8h4M9 11h4M5 18h12" stroke="#463b33" stroke-width="1.300"/><circle cx="2" cy="9" r="1" fill="#555"/></svg></button>
      <button class="run" aria-label="Word"><svg width="24" height="22" viewBox="0 0 24 22"><path d="M6 0h18v22H6z" fill="#2b7cd3"/><path d="M6 7h18v8H6z" fill="#185abd"/><path d="M6 15h18v7H6z" fill="#103f91"/><rect y="5" width="13" height="13" rx="1" fill="#1650a8"/><text x="6" y="15" text-anchor="middle" class="word">W</text></svg></button>
    </div>
    <div class="tray">
      <button aria-label="Hidden icons"><svg width="12" height="8" viewBox="0 0 12 8"><path d="M1 7l5-5 5 5" fill="none" stroke="currentColor" stroke-width="1.500"/></svg></button>
      <button aria-label="OneDrive"><svg width="18" height="16" viewBox="0 0 18 16"><path d="M4 12Q0 11 1 8t4-3q3-5 8-2 2 1 2 4z" fill="#8a969e" stroke="#2d353b" stroke-width="1.500"/><circle cx="12.500" cy="11" r="4.800" fill="#eee6ee"/><path d="M9.500 10.500q3-4 6-1M15.500 11.500q-3 4-6 1M15.800 7.500v2.300h-2.300M9.300 14.500v-2.300h2.300" fill="none" stroke="#1465ab" stroke-width="1.200"/></svg></button>
      <span class="lang">ENG<br>IN</span>
      <svg width="16" height="14" viewBox="0 0 16 14"><g fill="none" stroke="currentColor" stroke-width="1.300"><path d="M1 5q7-6.500 14 0M3.300 7.500q4.700-4.300 9.400 0M5.500 10q2.500-2.300 5 0"/></g><circle cx="8" cy="12" r="1.400" fill="currentColor"/></svg>
      <svg width="18" height="14" viewBox="0 0 18 14"><g fill="none" stroke="currentColor" stroke-width="1.200"><path d="M1 5h3l4-3.500v11L4 9H1z"/><path d="M10 5q1.500 2 0 4M12 3q3.500 4 0 8M14 1.500q5 5.500 0 11"/></g></svg>
      <svg width="18" height="14" viewBox="0 0 18 14"><path d="M2 4h13v8H2z" fill="currentColor" stroke="currentColor" stroke-width="1.500" stroke-linejoin="round"/><path d="M16.500 6.500v3" stroke="currentColor" stroke-width="1.600"/><path d="M3 0v3q0 3-2 3M1 1.500h4" stroke="currentColor" stroke-width="1.300" fill="none"/></svg>
      <span class="clock">14:03<br>22-02-2025</span>
      <svg width="14" height="16" viewBox="0 0 14 16"><path d="M2 4q1-2.500 5-2.500T12 5v6l1.500 2H0L2 11z" fill="currentColor"/><path d="M5 14h4q-2 3-4 0z" fill="currentColor"/><path d="M5 5.500h3.500L5 9.500h3.500M10.500 1.500H13l-2.500 3H13" fill="none" stroke="#eaddea" stroke-width="1"/><path d="M10.500 1.500H13.500" stroke="currentColor"/></svg>
    </div>
  </footer>
</body>
</html>
```
FILE: styles.css
```css
* {
  box-sizing: border-box;
}

body {
  margin: 0;
  min-height: 100vh;
  display: flex;
  flex-direction: column;
  font-family: "Open Sans", "Noto Sans", sans-serif;
  font-size: 12px;
  background: #f9fbfd;
  overflow: hidden;
}

button {
  border: 0;
  padding: 0;
  background: none;
  color: inherit;
  font: inherit;
  white-space: nowrap;
  display: flex;
  align-items: center;
  justify-content: center;
  flex: none;
}

input {
  border: 0;
  padding: 0;
  background: none;
  font: inherit;
  color: inherit;
  min-width: 0;
}

svg {
  flex: none;
  display: block;
}

.defs {
  position: absolute;
}

.caret {
  flex: none;
  border: 4px solid transparent;
  border-top-color: currentColor;
  border-bottom: 0;
}

/* Browser tabs */
.tabstrip {
  height: 40px;
  padding-left: 6px;
  display: flex;
  align-items: center;
  background: #6b1014;
  color: #fff;
}

.tab-search {
  width: 28px;
  height: 28px;
  border-radius: 8px;
  background: #a81d1d;
}

.tab {
  width: 242px;
  height: 34px;
  margin-top: 6px;
  padding: 0 14px;
  display: flex;
  align-items: center;
  gap: 8px;
}

.tab.current {
  width: 234px;
  padding: 0 10px;
  background: #a81d1d;
  border-radius: 10px 10px 0 0;
}

.tab svg, .tab-name, .tab .close {
  margin-bottom: 6px;
}

.tab .close svg {
  margin: 0;
}

.tab-name {
  flex: 1;
  overflow: hidden;
  white-space: nowrap;
}

.current .tab-name {
  -webkit-mask-image: linear-gradient(90deg, #000 85%, transparent);
  mask-image: linear-gradient(90deg, #000 85%, transparent);
}

.new-tab {
  width: 38px;
  height: 28px;
}

.window-buttons {
  margin-left: auto;
  display: flex;
}

.window-buttons button {
  width: 46px;
  height: 40px;
}

/* Address bar */
.navbar {
  height: 43px;
  padding: 1px 6px 0 4px;
  display: flex;
  align-items: center;
  background: #a81d1d;
  color: #fff;
  border-top: 1px solid #b51a22;
}

.nav {
  width: 36px;
  height: 34px;
}

.nav.dim {
  color: #d36b68;
}

.omnibox {
  flex: 1;
  min-width: 0;
  height: 34px;
  margin-left: 8px;
  padding: 0 15px 0 3px;
  border-radius: 17px;
  display: flex;
  align-items: center;
  background: #831c1f;
}

.site-info {
  width: 28px;
  height: 28px;
  border-radius: 50%;
  background: #a81d1d;
}

.url {
  flex: 1;
  min-width: 0;
  margin-left: 6px;
  overflow: hidden;
  white-space: nowrap;
  font-family: "Noto Sans", sans-serif;
  font-size: 13px;
  color: #e0a3a1;
}

.url b {
  font-weight: 400;
  color: #fff;
}

.fav {
  color: #f0c4c2;
}

.extensions {
  display: flex;
  margin-left: 8px;
}

.extensions button {
  width: 36px;
}

.bar {
  flex: none;
  width: 2px;
  height: 16px;
  background: #7d1418;
}

.navbar .bar {
  margin: 0 9px 0 8px;
}

.media {
  width: 36px;
}

.profile {
  width: 20px;
  height: 20px;
  margin: 0 12px 0 6px;
  border-radius: 50%;
  background: #0b5b43;
  font-size: 11px;
}

.error {
  width: 66px;
  height: 34px;
  gap: 10px;
  border-radius: 17px;
  background: #6b1014;
}

/* Bookmarks */
.bookmarks {
  height: 38px;
  padding: 0 15px 4px 19px;
  display: flex;
  align-items: center;
  gap: 14px;
  background: #a81d1d;
  color: #fff;
  border-bottom: 1px solid #c04743;
}

.bookmarks a {
  display: flex;
  align-items: center;
  gap: 6px;
  color: #fff;
  text-decoration: none;
  white-space: nowrap;
}

.more-marks {
  margin-left: auto;
}

/* Default browser bar */
.infobar {
  height: 52px;
  padding: 0 20px 0 17px;
  display: flex;
  align-items: center;
  gap: 17px;
  background: #a81d1d;
  color: #fff;
  font-family: "Noto Sans", sans-serif;
}

.set-default {
  width: 112px;
  height: 38px;
  border-radius: 19px;
  background: #91483f;
  font-weight: 600;
}

.infobar .close {
  margin-left: auto;
}

/* Sheets header */
.app {
  flex: 1;
  display: flex;
  flex-direction: column;
  font-family: Inter, Roboto, sans-serif;
  color: #444746;
  border-top: 2px solid #e6dcd8;
}

.doc-head {
  height: 64px;
  padding: 0 20px;
  display: flex;
}

.logo {
  margin-top: 13px;
}

.doc-info {
  margin: 8px 0 0 13px;
  font-family: Roboto, sans-serif;
}

.title-row {
  display: flex;
  align-items: center;
  gap: 14px;
  height: 26px;
}

h1 {
  margin: 0 4px 0 0;
  font-size: 18px;
  font-weight: 400;
  color: #1f1f1f;
  white-space: nowrap;
}

.menus {
  display: flex;
  gap: 17px;
  height: 20px;
  padding-left: 1px;
  font-size: 14px;
}

.doc-actions {
  margin-left: auto;
  height: 56px;
  display: flex;
  align-items: center;
}

.avatar {
  width: 32px;
  height: 32px;
  margin-right: 6px;
  border-radius: 50%;
  display: flex;
  align-items: center;
  justify-content: center;
  font-family: Roboto, sans-serif;
  font-size: 16px;
  font-weight: 500;
  color: #fff;
}

.avatar.y {
  background: #8d6e63;
  border: 2px solid #b8323c;
}

.avatar.b {
  background: #455a64;
  border: 2px solid #8a6420;
}

.avatar.chat {
  background: #dde3f8;
}

.avatar.me {
  margin: 0;
  background: #00503f;
}

.act {
  width: 50px;
}

.history {
  width: 49px;
}

.meet {
  width: 62px;
  margin-left: 6px;
  padding-left: 3px;
  gap: 9px;
}

.share {
  display: flex;
  width: 124px;
  height: 40px;
  margin-left: 13px;
  border-radius: 20px;
  overflow: hidden;
  color: #001d35;
}

.share-main {
  width: 90px;
  padding-left: 10px;
  gap: 8px;
  font-size: 14px;
  font-weight: 500;
  background: #c2e7ff;
}

.share-more {
  flex: 1;
  margin-left: 1px;
  background: #c2e7ff;
}

.gemini {
  width: 56px;
  margin-right: 4px;
}

/* Toolbar */
.toolbar {
  height: 38px;
  margin: 0 15px 7px;
  padding-left: 10px;
  border-radius: 19px;
  display: flex;
  align-items: center;
  background: #eef2fa;
}

.tb {
  width: 32px;
  height: 28px;
}

.tb.first {
  width: 36px;
}

.sep {
  flex: none;
  width: 1px;
  height: 20px;
  margin: 0 4px;
  background: #c7cbd1;
}

.zoom, .font {
  font-size: 14px;
  justify-content: space-between;
}

.zoom {
  width: 75px;
  padding: 0 8px;
  color: #b8bcc2;
}

.font {
  width: 98px;
  padding: 0 12px;
  font-family: Roboto, sans-serif;
}

.txt {
  font-family: Roboto, sans-serif;
  font-size: 14px;
}

.dec {
  flex-direction: column;
  font-family: Roboto, sans-serif;
  font-size: 14px;
  font-weight: 500;
  line-height: 12px;
}

.dec svg {
  margin-left: 12px;
}

.num {
  font-family: Roboto, sans-serif;
  font-size: 12px;
}

.step {
  width: 24px;
}

.size {
  width: 32px;
  height: 24px;
  margin: 0 4px;
  border: 1px solid #747775;
  border-radius: 4px;
  text-align: center;
  font-size: 14px;
}

.bold {
  font-size: 14px;
  font-weight: 700;
}

.ital {
  font-family: "Liberation Mono", monospace;
  font-size: 17px;
  font-weight: 700;
  font-style: italic;
}

.color, .fill {
  width: 24px;
  height: 22px;
  margin: 0 4px;
  font-size: 14px;
  border-bottom: 4px solid #000;
}

.fill {
  border-bottom-color: #fff;
}

.drop {
  width: 41px;
  gap: 6px;
}

.off {
  width: 45px;
  gap: 9px;
  color: #b8bcc2;
}

.collapse {
  margin: 0 14px 0 auto;
}

/* Formula bar */
.formula-bar {
  height: 31px;
  padding-left: 14px;
  display: flex;
  align-items: center;
  background: #fff;
  font-family: Roboto, sans-serif;
  font-size: 13px;
  color: #1f1f1f;
}

.name-box {
  width: 72px;
}

.formula-bar .caret {
  color: #444746;
}

.formula-bar .sep {
  margin: 0 12px;
}

.fx {
  width: 22px;
  font-family: "Liberation Serif", serif;
  font-style: italic;
  font-size: 16px;
  color: #80868b;
}

.formula {
  flex: 1;
}

/* Grid */
.sheet {
  flex: 1;
  display: flex;
  background: #fff;
  border-top: 1px solid #c4c7c5;
}

.grid {
  flex: 1;
  min-width: 0;
}

table {
  width: 100%;
  table-layout: fixed;
  border-collapse: separate;
  border-spacing: 0;
  font-family: "Liberation Sans", Arial, sans-serif;
  font-size: 13px;
  color: #000;
}

.c-row { width: 46px; }
.c-d { width: 64px; }
.c-e { width: 120px; }
.c-f { width: 79px; }
.c-g { width: 124px; }
.c-h { width: 220px; }
.c-i { width: 106px; }
.c-s { width: 77px; }
.c-m { width: 84px; }

td, tbody th {
  height: 21px;
  padding: 0 3px;
  overflow: hidden;
  white-space: nowrap;
  line-height: 20px;
  border-right: 1px solid #e0e0e0;
  border-bottom: 1px solid #e0e0e0;
}

tbody th {
  border-color: #c4c4c4;
  border-bottom-color: #dcdcdc;
  font-size: 11px;
  font-weight: 400;
  color: #575a5a;
}

.letters th {
  height: 23px;
  padding: 0 0 3px;
  font-size: 12px;
  font-weight: 400;
  color: #575a5a;
  border-right: 1px solid #c4c4c4;
}

.letters .corner {
  background: #f8f9fa;
  border-right: 5px solid #bcbcbc;
}

.letters .on, tbody th.on {
  background: #d3e3fd;
  font-weight: 700;
  color: #1b2b4a;
}

.letters .date, .titles .date {
  padding-right: 18px;
}

.titles th {
  height: 53px;
  padding: 0;
  line-height: 16px;
  background: #9900ff;
  color: #ffff00;
}

.titles .rownum {
  position: relative;
  background: #fff;
  border-right: 1px solid #c4c4c4;
  font-size: 11px;
  font-weight: 400;
  color: #575a5a;
}

.up {
  position: absolute;
  left: 4px;
  bottom: 5px;
  border: 3px solid transparent;
  border-top: 0;
  border-bottom: 4px solid #333;
}

.titles .green {
  background: #00ff00;
  color: #5b4000;
}

.titles .line {
  box-shadow: inset 1px -1px #33005c;
}

.freeze td {
  height: 6px;
  line-height: 0;
  padding: 0;
  border: 0;
  border-bottom: 1px solid #e0e0e0;
  background: #c4c4c4;
}

.dt {
  padding: 0 11px 0 0;
  text-align: right;
  font-weight: 700;
}

.clip {
  padding: 0;
}

.clip div {
  display: flex;
  justify-content: center;
  overflow: hidden;
}

.who {
  position: relative;
  font-weight: 700;
}

.who::after {
  content: "";
  position: absolute;
  right: 6px;
  top: 8px;
  border: 4px solid transparent;
  border-top-color: #747775;
  border-bottom: 0;
}

.n {
  text-align: center;
}

.active {
  box-shadow: inset 0 0 0 2px #1a56b0;
  outline: 1px solid #a8c7fa;
}

/* Scrollbars */
.hscroll {
  height: 12px;
  display: flex;
}

.hcorner {
  width: 46px;
  background: #f8f9fa;
  border-right: 1px solid #c4c4c4;
}

.htrack {
  flex: 1;
  padding: 1px 0 1px 338px;
}

.htrack i {
  display: block;
  height: 10px;
  border-radius: 5px;
  background: #dadada;
}

.hscroll button, .vscroll button {
  width: 16px;
  height: 12px;
  font-size: 8px;
  color: #747775;
}

.vscroll {
  width: 12px;
  display: flex;
  flex-direction: column;
  align-items: center;
  border-left: 1px solid #dadada;
  padding-bottom: 15px;
}

.vscroll button {
  width: 12px;
  height: 16px;
  border-top: 1px solid #e0e0e0;
}

.thumb {
  width: 9px;
  height: 28px;
  margin: 182px 0 auto;
  border-radius: 5px;
  background: #dadada;
}

/* Sheet tabs */
.sheet-tabs {
  height: 37px;
  padding-left: 42px;
  display: flex;
  background: #f9fbfd;
  border-top: 1px solid #dadce0;
  border-bottom: 1px solid #b4b8b0;
}

.st-icon {
  width: 40px;
  padding-top: 2px;
}

.faint {
  color: #b0b3b5;
}

.side {
  margin: 0 8px 0 auto;
}

.st-list {
  width: 1000px;
  margin-left: 13px;
  display: flex;
  overflow: hidden;
  border-right: 1px solid #c4c7c5;
}

.st {
  padding: 2px 15px 0 12px;
  gap: 13px;
  font-size: 14px;
  font-weight: 500;
}

.master {
  padding-right: 12px;
  gap: 11px;
}

.st.current {
  padding-right: 12px;
  background: #e1e9f7;
  color: #0b57d0;
  font-weight: 700;
}

.locked {
  gap: 5px;
}

.locked .caret {
  margin-left: 8px;
}

/* Taskbar */
.taskbar {
  height: 48px;
  padding: 0 21px 0 20px;
  display: flex;
  align-items: center;
  background: linear-gradient(90deg, #dce6c9 0%, #dbe6cf 14%, #dce6d2 30%, #e0e2ee 36%, #dce4f6 50%, #e7dcf0 64%, #dde3f8 72%, #e4dff0 78%, #f5ded5 88%, #f0dbdf 94%, #e4d9ec 100%);
  color: #222;
}

.weather {
  position: relative;
}

.badge {
  position: absolute;
  right: -1px;
  top: -2px;
  width: 16px;
  height: 16px;
  border-radius: 50%;
  background: #c42b2b;
  color: #fff;
  font-size: 10px;
  line-height: 16px;
}

.apps {
  display: flex;
  align-items: center;
  margin-left: 119px;
}

.apps button {
  position: relative;
  width: 44px;
  height: 40px;
}

.search {
  width: 217px;
  height: 32px;
  margin: 0 3px 0 5px;
  padding: 0 3px 0 10px;
  border-radius: 16px;
  display: flex;
  align-items: center;
  gap: 9px;
  background: #f7faee;
  font-size: 13px;
}

.search input {
  flex: 1;
}

.search input::placeholder {
  color: #555;
}

.run::after {
  content: "";
  position: absolute;
  bottom: 1px;
  left: 19px;
  width: 6px;
  height: 3px;
  border-radius: 2px;
  background: #82858c;
}

.front::before {
  content: "";
  position: absolute;
  inset: 0 3px;
  border-radius: 4px;
  background: #f2f4fb;
}

.front svg {
  position: relative;
}

.front::after {
  left: 14px;
  width: 16px;
  background: #3d739f;
}

.dell {
  font: 700 7px "Liberation Sans", sans-serif;
}

.mini {
  font: 10px "Liberation Sans", sans-serif;
  fill: #fff;
}

.word {
  font: 700 10px "Liberation Sans", sans-serif;
  fill: #fff;
}

.tray {
  margin-left: auto;
  display: flex;
  align-items: center;
  gap: 6px;
}

.tray button {
  width: 26px;
}

.lang {
  width: 40px;
  margin-right: 4px;
  text-align: center;
  line-height: 16px;
}

.clock {
  width: 72px;
  margin-right: 2px;
  text-align: right;
  font-size: 11px;
  line-height: 16px;
}
```
